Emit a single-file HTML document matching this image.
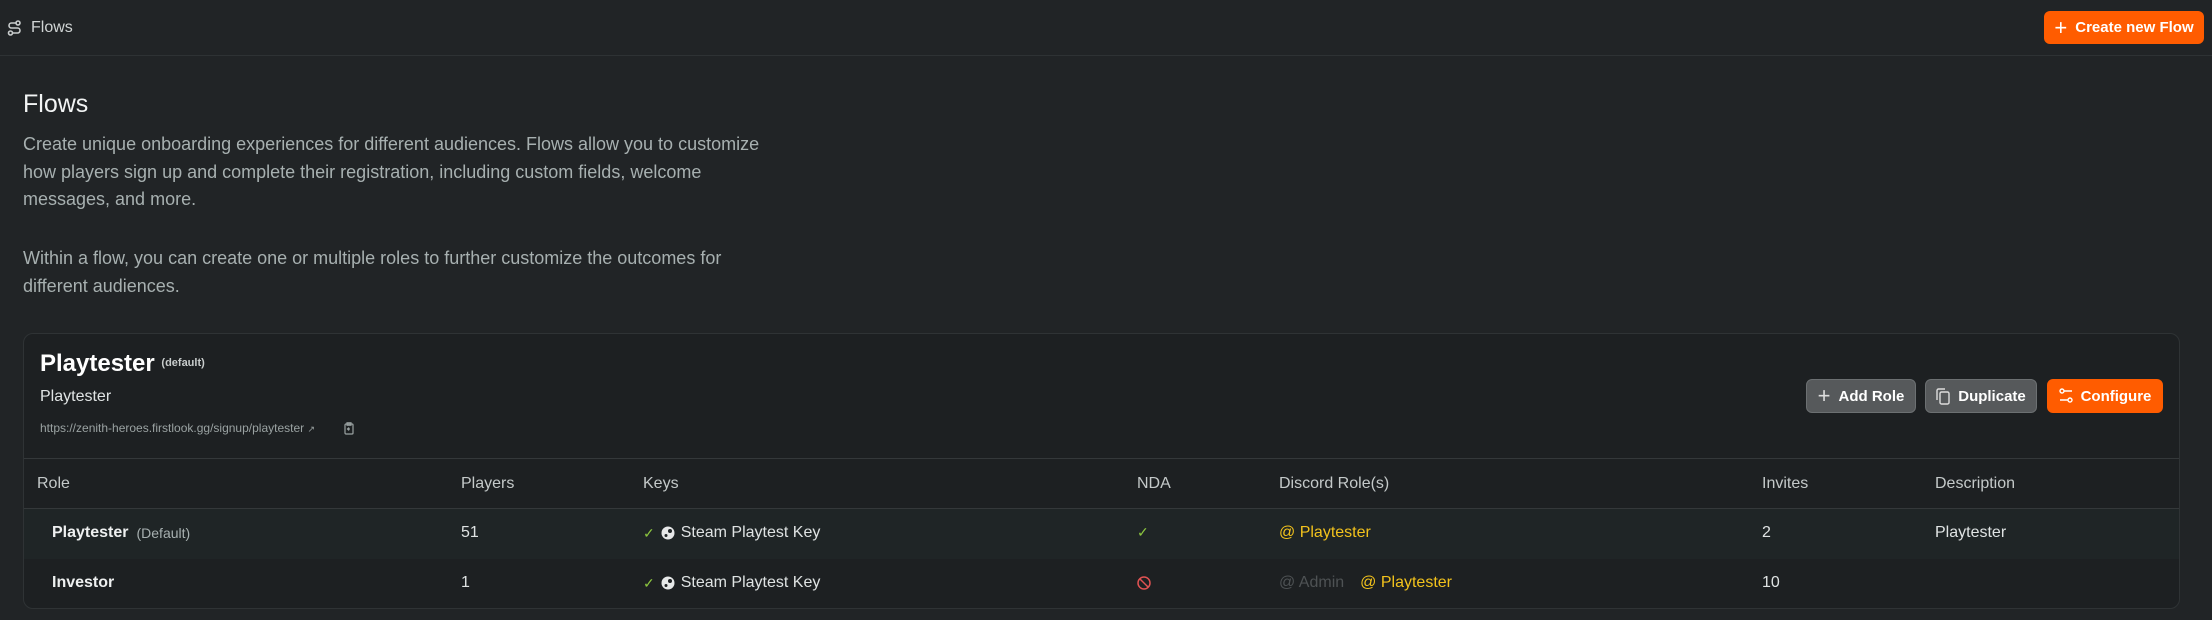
<!DOCTYPE html>
<html><head><meta charset="utf-8"><style>
*{box-sizing:border-box;margin:0;padding:0}
body{width:2212px;height:620px;background:#212426;font-family:"Liberation Sans",sans-serif;color:#d6dada;position:relative;overflow:hidden}
.abs{position:absolute;white-space:nowrap}
.hdr{position:absolute;left:0;top:0;width:2212px;height:56px;border-bottom:1px solid #2e3234}
.btn{position:absolute;border-radius:6px;display:flex;align-items:center;justify-content:center;font-weight:bold;font-size:15px;color:#fff;gap:8px}
.card{position:absolute;left:23px;top:333px;width:2157px;height:276px;border:1px solid #2f3335;border-radius:10px;background:#1d2022;overflow:hidden}
.th{position:absolute;top:475px;font-size:16px;color:#c4c9c9}
.td{position:absolute;font-size:16px;color:#dfe3e3;white-space:nowrap;display:flex;align-items:center;gap:6px}
</style></head><body>
<div class="hdr"></div>
<svg class="abs" style="left:7px;top:20px" width="15" height="16" viewBox="0 0 15 16" fill="none" stroke="#c8cccc" stroke-width="1.6"><circle cx="11" cy="3" r="2"/><circle cx="3.5" cy="13" r="2"/><path d="M9 3H4.5a2.5 2.5 0 0 0 0 5h6a2.5 2.5 0 0 1 0 5H6"/></svg>
<div class="abs" style="left:31px;top:19px;font-size:16px;color:#d0d4d4">Flows</div>
<div class="btn" style="left:2044px;top:11px;width:160px;height:33px;background:#ff5c00"><span style="font-size:22px;font-weight:normal;line-height:1">+</span>Create new Flow</div>

<div class="abs" style="left:23px;top:90px;font-size:25px;color:#f2f4f4">Flows</div>
<div class="abs" style="left:23px;top:131px;font-size:18px;line-height:27.6px;color:#a7b0b0">Create unique onboarding experiences for different audiences. Flows allow you to customize<br>how players sign up and complete their registration, including custom fields, welcome<br>messages, and more.</div>
<div class="abs" style="left:23px;top:245px;font-size:18px;line-height:27.6px;color:#a7b0b0">Within a flow, you can create one or multiple roles to further customize the outcomes for<br>different audiences.</div>

<div class="card">
 <div style="position:absolute;left:0;top:124px;width:100%;height:1px;background:#34383a"></div>
 <div style="position:absolute;left:0;top:174px;width:100%;height:1px;background:#34383a"></div>
 <div style="position:absolute;left:0;top:175px;width:100%;height:50px;background:#1f2526"></div>
</div>
<div class="abs" style="left:40px;top:350px;font-size:24px;font-weight:bold;color:#fff">Playtester <span style="font-size:11px;color:#c8cccc;vertical-align:5px">(default)</span></div>
<div class="abs" style="left:40px;top:388px;font-size:16px;color:#e0e4e4">Playtester</div>
<div class="abs" style="left:40px;top:421px;font-size:12px;color:#9aa2a2">https://zenith-heroes.firstlook.gg/signup/playtester <span style="font-size:9px">↗</span></div>
<svg class="abs" style="left:344px;top:422px" width="10" height="13" viewBox="0 0 10 13" fill="none" stroke="#9aa2a2" stroke-width="1.2"><rect x="1" y="2" width="8" height="10" rx="1"/><rect x="3" y="0.8" width="4" height="2.4"/><path d="M6 7H3.5M5 5.5 3.5 7 5 8.5"/></svg>

<div class="btn" style="left:1806px;top:379px;width:110px;height:34px;background:#56595b;border:1px solid #6c7072"><span style="font-size:22px;font-weight:normal;line-height:1;color:#ddd">+</span>Add Role</div>
<div class="btn" style="left:1925px;top:379px;width:112px;height:34px;background:#56595b;border:1px solid #6c7072"><svg width="14" height="17" viewBox="0 0 14 17" fill="none" stroke="#ddd" stroke-width="1.4"><rect x="4" y="4" width="9" height="12" rx="1.5"/><path d="M1 12V2.5A1.5 1.5 0 0 1 2.5 1H9"/></svg>Duplicate</div>
<div class="btn" style="left:2047px;top:379px;width:116px;height:34px;background:#ff5c00"><svg width="14" height="16" viewBox="0 0 14 16" fill="none" stroke="#fff" stroke-width="1.4"><circle cx="3" cy="3" r="2"/><path d="M5 3h8M1 12h8"/><circle cx="11" cy="12" r="2"/></svg>Configure</div>

<div class="th" style="left:37px">Role</div>
<div class="th" style="left:461px">Players</div>
<div class="th" style="left:643px">Keys</div>
<div class="th" style="left:1137px">NDA</div>
<div class="th" style="left:1279px">Discord Role(s)</div>
<div class="th" style="left:1762px">Invites</div>
<div class="th" style="left:1935px">Description</div>

<div class="td" style="left:52px;top:524px"><b style="color:#eef0f0">Playtester</b><span style="font-size:14px;color:#a7b0b0;margin-left:2px">(Default)</span></div>
<div class="td" style="left:461px;top:524px">51</div>
<div class="td" style="left:643px;top:524px"><span style="color:#8cc63f;font-size:14px">✓</span><svg width="14" height="14" viewBox="0 0 14 14"><circle cx="7" cy="7" r="6.5" fill="#e6e8e8"/><circle cx="9" cy="5" r="2" fill="#1f2526"/><circle cx="5" cy="9.5" r="1.5" fill="#1f2526"/></svg>Steam Playtest Key</div>
<div class="td" style="left:1137px;top:524px"><span style="color:#8cc63f;font-size:14px">✓</span></div>
<div class="td" style="left:1279px;top:524px;color:#f2c21c">@ Playtester</div>
<div class="td" style="left:1762px;top:524px">2</div>
<div class="td" style="left:1935px;top:524px">Playtester</div>

<div class="td" style="left:52px;top:574px"><b style="color:#eef0f0">Investor</b></div>
<div class="td" style="left:461px;top:574px">1</div>
<div class="td" style="left:643px;top:574px"><span style="color:#8cc63f;font-size:14px">✓</span><svg width="14" height="14" viewBox="0 0 14 14"><circle cx="7" cy="7" r="6.5" fill="#e6e8e8"/><circle cx="9" cy="5" r="2" fill="#1d2022"/><circle cx="5" cy="9.5" r="1.5" fill="#1d2022"/></svg>Steam Playtest Key</div>
<div class="td" style="left:1137px;top:576px"><svg width="14" height="14" viewBox="0 0 14 14" fill="none" stroke="#e05252" stroke-width="1.5"><circle cx="7" cy="7" r="6"/><path d="M3 3l8 8"/></svg></div>
<div class="td" style="left:1279px;top:574px"><span style="color:#4e5254">@ Admin</span><span style="color:#f2c21c;margin-left:10px">@ Playtester</span></div>
<div class="td" style="left:1762px;top:574px">10</div>
</body></html>
